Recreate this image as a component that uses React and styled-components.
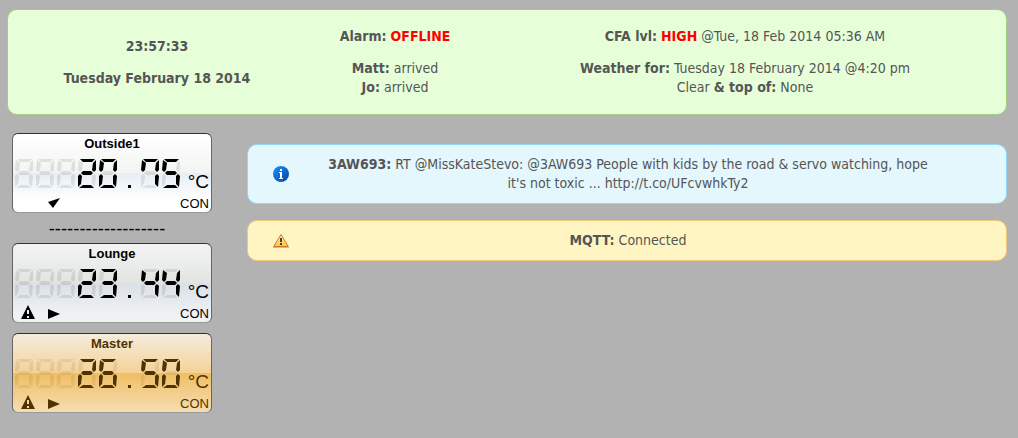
import React from 'react';
import styled, { createGlobalStyle } from 'styled-components';

const Global = createGlobalStyle`
  * { box-sizing: border-box; }
  body {
    margin: 0;
    background: #b2b2b2;
    color: #555;
    font: 14px/19px Tahoma, "DejaVu Sans Condensed", sans-serif;
  }
  p { margin: 0; }
`;

const Page = styled.div`
  padding: 9px 11px 24px 7px;
`;

const Panel = styled.section`
  border: 1px solid ${(p) => p.$line};
  border-radius: 10px;
  background: ${(p) => p.$fill};
  text-align: center;
`;

const StatusPanel = styled(Panel)`
  display: grid;
  grid-template-columns: 298fr 178fr 522fr;
  min-height: 106px;
`;

const StatusColumn = styled.div`
  display: flex;
  flex-direction: column;
  gap: 13px;
  padding-top: ${(p) => p.$top}px;
`;

const Alert = styled.b`
  color: #f00;
`;

const Body = styled.main`
  display: grid;
  grid-template-columns: 200px 1fr;
  column-gap: 35px;
  padding: 18px 0 0 5px;
`;

const Gauges = styled.div`
  display: flex;
  flex-direction: column;
  gap: 10px;
`;

const Separator = styled.div`
  height: 10px;
  padding-right: 10px;
  color: #000;
  font-family: "DejaVu Sans", sans-serif;
  font-size: 17px;
  line-height: 10px;
  text-align: center;
`;

const themes = {
  white: {
    fill: 'linear-gradient(#fff, #f1f5f1 50%, #e6eef4 50%, #fff 85%)',
    ink: '#000',
  },
  grey: {
    fill: 'linear-gradient(#f3f4f3, #e1e5e2 50%, #d9e0e7 50%, #f0f1f3 90%)',
    ink: '#000',
  },
  amber: {
    fill: 'linear-gradient(#f5ecdd, #f4d297 50%, #f0be63 50%, #f5ddb3)',
    ink: '#4e3400',
  },
};

const Lcd = styled.article`
  display: flex;
  flex-direction: column;
  height: 80px;
  border: 1px solid;
  border-color: #333 #666 #999 #666;
  border-radius: 6px;
  background: ${(p) => themes[p.$theme].fill};
  color: ${(p) => themes[p.$theme].ink};
  font-family: "Liberation Sans", Arial, sans-serif;
`;

const LcdTitle = styled.h2`
  margin: 0;
  padding-top: 1px;
  font-size: 13px;
  line-height: 18px;
  text-align: center;
`;

const Reading = styled.div`
  display: flex;
  align-items: flex-end;
  justify-content: space-between;
  height: 42px;
  padding: 0 2px 4px 1px;
`;

const Unit = styled.span`
  font-size: 19px;
  line-height: 18px;
`;

const LcdFoot = styled.div`
  display: flex;
  justify-content: space-between;
  height: 17px;
  padding: 0 2px 0 8px;
  font-size: 13px;
  line-height: 17px;
`;

const segments = {
  a: 'M2 0H17L14 3H5Z',
  b: 'M18 1V11L16 13L14 11L15 4Z',
  c: 'M16 15L18 17L17 28L14 25V17Z',
  d: 'M5 26H13L16 29H1Z',
  e: 'M0 17L2 15L4 17L3 25L0 28Z',
  f: 'M1 1L5 4L4 11L2 13L0 11Z',
  g: 'M5 12H13L15 14L13 16H5L3 14Z',
};
const lit = {
  0: 'abcdef', 2: 'abged', 3: 'abgcd', 4: 'fgbc', 5: 'afgcd', 6: 'afgedc', 7: 'fabc',
};

function Digits({ value }) {
  const cells = value.padStart(8, ' ').split('');
  return (
    <svg width="170" height="32" role="img" aria-label={value.trim()}>
      {cells.map((ch, i) => (
        <g key={i} transform={`translate(${1 + i * 21} 0)`} fill="currentColor">
          {ch === '.' ? (
            <path d="M8 26H11V29H8Z" />
          ) : (
            Object.entries(segments).map(([name, d]) => (
              <path key={name} d={d} opacity={(lit[ch] || '').includes(name) ? 1 : 0.09} />
            ))
          )}
        </g>
      ))}
    </svg>
  );
}

function Gauge({ title, value, theme, warn, rising }) {
  return (
    <Lcd $theme={theme}>
      <LcdTitle>{title}</LcdTitle>
      <Reading>
        <Digits value={value} />
        <Unit>°C</Unit>
      </Reading>
      <LcdFoot>
        <svg width="50" height="16" fill="currentColor" aria-hidden="true">
          {warn && <path fillRule="evenodd" d="M7 0L14 14H0ZM6 5V9H8V5ZM6 11V13H8V11Z" />}
          {rising ? <path d="M27 7L39 3L32 13Z" /> : <path d="M27 4L39 9L27 14Z" />}
        </svg>
        <span>CON</span>
      </LcdFoot>
    </Lcd>
  );
}

const Messages = styled.div`
  display: flex;
  flex-direction: column;
  gap: 16px;
  padding-top: 11px;
`;

const Message = styled(Panel)`
  display: grid;
  grid-template-columns: 16px 1fr;
  column-gap: 34px;
  align-items: center;
  padding: 10px 73px 10px 25px;
`;

function InfoIcon() {
  return (
    <svg width="16" height="16" aria-hidden="true">
      <defs>
        <linearGradient id="info" x2="1" y2="1">
          <stop stopColor="#1e90f5" />
          <stop offset="1" stopColor="#0043a8" />
        </linearGradient>
      </defs>
      <circle cx="8" cy="8" r="8" fill="url(#info)" />
      <path fill="#fff" d="M7 3H9V5H7ZM6 6H9V12H10V13H6V12H7V7H6Z" />
    </svg>
  );
}

function WarningIcon() {
  return (
    <svg width="16" height="16" aria-hidden="true">
      <defs>
        <linearGradient id="warning" x2="0" y2="1">
          <stop stopColor="#fff3b0" />
          <stop offset="1" stopColor="#ffc62b" />
        </linearGradient>
      </defs>
      <path d="M0 14.5H16" stroke="#a9824a" opacity=".5" />
      <path d="M8 1.5L15.3 13.5H.7Z" fill="url(#warning)" stroke="#d2762d" strokeLinejoin="round" />
      <path d="M7 5H9V9H7ZM7 10H9V12H7Z" fill="#3c4250" />
    </svg>
  );
}

export default function App() {
  return (
    <>
      <Global />
      <Page>
        <StatusPanel as="header" $fill="#e6ffd9" $line="#a3cf84">
          <StatusColumn $top={27}>
            <b>23:57:33</b>
            <b>Tuesday February 18 2014</b>
          </StatusColumn>
          <StatusColumn $top={17}>
            <p><b>Alarm:</b> <Alert>OFFLINE</Alert></p>
            <p><b>Matt:</b> arrived<br /><b>Jo:</b> arrived</p>
          </StatusColumn>
          <StatusColumn $top={17}>
            <p><b>CFA lvl:</b> <Alert>HIGH</Alert> @Tue, 18 Feb 2014 05:36 AM</p>
            <p><b>Weather for:</b> Tuesday 18 February 2014 @4:20 pm<br />Clear <b>&amp; top of:</b> None</p>
          </StatusColumn>
        </StatusPanel>
        <Body>
          <Gauges>
            <Gauge title="Outside1" value="20.75" theme="white" rising />
            <Separator>-------------------</Separator>
            <Gauge title="Lounge" value="23.44" theme="grey" warn />
            <Gauge title="Master" value="26.50" theme="amber" warn />
          </Gauges>
          <Messages>
            <Message $fill="#e3f7fc" $line="#8ed9f6">
              <InfoIcon />
              <p><b>3AW693:</b> RT @MissKateStevo: @3AW693 People with kids by the road &amp; servo watching, hope it's not toxic ... http://t.co/UFcvwhkTy2</p>
            </Message>
            <Message $fill="#fff5c3" $line="#f2c779">
              <WarningIcon />
              <p><b>MQTT:</b> Connected</p>
            </Message>
          </Messages>
        </Body>
      </Page>
    </>
  );
}
